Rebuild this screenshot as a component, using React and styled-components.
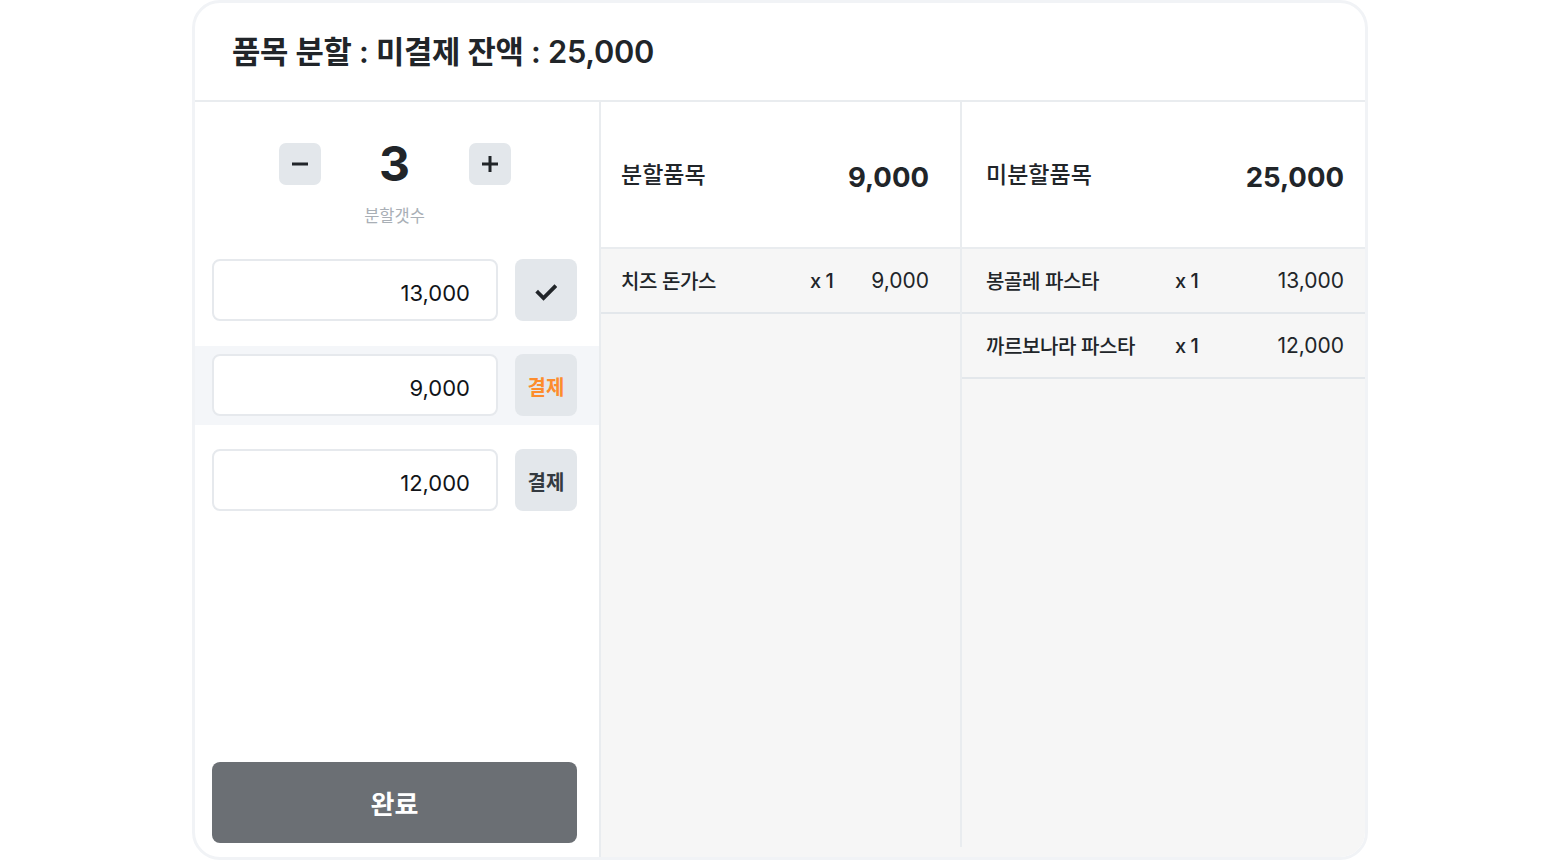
import React from "react";
import styled, { createGlobalStyle } from "styled-components";

const Global = createGlobalStyle`
  html, body { margin: 0; padding: 0; background: #ffffff; }
  body { font-family: Inter, "Noto Sans CJK KR", "Noto Sans", sans-serif; color: #212529; }
  * { box-sizing: border-box; }
`;

const Page = styled.div`
  width: 1560px;
  height: 860px;
  display: flex;
  justify-content: center;
  background: #ffffff;
`;

const Card = styled.div`
  width: 1176px;
  height: 860px;
  border: 3px solid #f1f3f6;
  border-radius: 28px;
  overflow: hidden;
  display: flex;
  flex-direction: column;
  background: #ffffff;
`;

const Header = styled.div`
  height: 99px;
  flex: none;
  display: flex;
  align-items: center;
  padding: 0 0 4px 37px;
  border-bottom: 2px solid #e9ecef;
`;

const Title = styled.h1`
  margin: 0;
  font-size: 30.8px;
  font-weight: 600;
  letter-spacing: -0.3px;
  color: #212529;
`;

const Body = styled.div`
  flex: 1;
  display: flex;
  min-height: 0;
`;

const LeftPanel = styled.div`
  width: 406px;
  flex: none;
  border-right: 2px solid #e9ecef;
  display: flex;
  flex-direction: column;
  padding-top: 41px;
`;

const Stepper = styled.div`
  display: flex;
  align-items: center;
  justify-content: center;
  padding: 0 22px 0 17px;
`;

const StepButton = styled.button`
  width: 42px;
  height: 42px;
  border: none;
  border-radius: 7px;
  background: #e3e7eb;
  display: flex;
  align-items: center;
  justify-content: center;
  padding: 0;
  cursor: pointer;
`;

const Count = styled.div`
  width: 148px;
  text-align: center;
  font-size: 48px;
  font-weight: 700;
  line-height: 42px;
  color: #212529;
`;

const CountLabel = styled.div`
  margin-top: 21px;
  text-align: center;
  font-size: 16.5px;
  line-height: 20px;
  color: #a9afb6;
  padding: 0 22px 0 17px;
`;

const Rows = styled.div`
  margin-top: 25px;
  display: flex;
  flex-direction: column;
  gap: 16px;
`;

const PayRow = styled.div`
  display: flex;
  align-items: center;
  gap: 17px;
  padding: 8px 22px 9px 17px;
  background: ${(p) => (p.$active ? "#f4f6f9" : "transparent")};
`;

const AmountInput = styled.input`
  width: 286px;
  height: 62px;
  border: 2px solid #e6e9ed;
  border-radius: 8px;
  background: #ffffff;
  text-align: right;
  padding: 5px 26px 0 12px;
  font-family: Inter, "Noto Sans CJK KR", sans-serif;
  font-size: 22px;
  color: #111418;
  outline: none;
`;

const ActionButton = styled.button`
  width: 62px;
  height: 62px;
  border: none;
  border-radius: 8px;
  background: #e3e7eb;
  display: flex;
  align-items: center;
  justify-content: center;
  padding: 3px 0 0;
  font-family: Inter, "Noto Sans CJK KR", sans-serif;
  font-size: 20px;
  font-weight: 700;
  color: ${(p) => (p.$accent ? "#fd8c2c" : "#343a40")};
  cursor: pointer;
`;

const Footer = styled.div`
  margin-top: auto;
  padding: 0 22px 14px 17px;
`;

const DoneButton = styled.button`
  width: 100%;
  height: 81px;
  border: none;
  border-radius: 8px;
  background: #6b6f74;
  color: #ffffff;
  font-family: Inter, "Noto Sans CJK KR", sans-serif;
  font-size: 26px;
  font-weight: 700;
  cursor: pointer;
`;

const ListArea = styled.div`
  flex: 1;
  display: flex;
  background: #f6f6f6;
`;

const ListPanel = styled.div`
  width: ${(p) => p.$width};
  flex: ${(p) => (p.$grow ? 1 : "none")};
  display: flex;
  flex-direction: column;
  border-right: ${(p) => (p.$divider ? "2px solid #e9ecef" : "none")};
  margin-bottom: ${(p) => (p.$divider ? "10px" : "0")};
`;

const Summary = styled.div`
  height: 147px;
  flex: none;
  background: #ffffff;
  border-bottom: 2px solid #e9ecef;
  display: flex;
  align-items: center;
  justify-content: space-between;
  padding: 0 ${(p) => p.$pr}px 0 ${(p) => p.$pl}px;
`;

const SummaryLabel = styled.div`
  font-size: 23px;
  font-weight: 500;
  color: #212529;
  margin-top: -3px;
`;

const SummaryValue = styled.div`
  font-size: 27.5px;
  font-weight: 700;
  color: #212529;
  margin-top: 4px;
`;

const ItemRow = styled.div`
  height: 65px;
  flex: none;
  display: flex;
  align-items: center;
  border-bottom: 2px solid #e3e7eb;
  padding: 0 ${(p) => p.$pr}px 0 ${(p) => p.$pl}px;
  font-size: 20px;
  font-weight: 500;
  color: #212529;
`;

const ItemName = styled.div`
  width: 189px;
  flex: none;
  letter-spacing: -0.4px;
`;

const ItemQty = styled.div`
  flex: none;
  word-spacing: -1px;
`;

const ItemPrice = styled.div`
  flex: 1;
  text-align: right;
  font-size: 21px;
  font-weight: 400;
`;

const MinusIcon = () => (
  <svg width="18" height="18" viewBox="0 0 18 18">
    <rect x="1" y="7.5" width="16" height="3" fill="#212529" />
  </svg>
);

const PlusIcon = () => (
  <svg width="18" height="18" viewBox="0 0 18 18">
    <rect x="1" y="7.5" width="16" height="3" fill="#212529" />
    <rect x="7.5" y="1" width="3" height="16" fill="#212529" />
  </svg>
);

const CheckIcon = () => (
  <svg width="22" height="22" viewBox="0 0 22 22">
    <path d="M3 11.5 L8.5 17 L19.5 6" fill="none" stroke="#212529" strokeWidth="3.8" strokeLinecap="square" strokeLinejoin="miter" />
  </svg>
);

const payRows = [
  { value: "13,000", kind: "check" },
  { value: "9,000", kind: "pay", active: true },
  { value: "12,000", kind: "pay" },
];

const splitItems = [{ name: "치즈 돈가스", qty: "x 1", price: "9,000" }];
const restItems = [
  { name: "봉골레 파스타", qty: "x 1", price: "13,000" },
  { name: "까르보나라 파스타", qty: "x 1", price: "12,000" },
];

export default function App() {
  return (
    <>
      <Global />
      <Page>
        <Card>
          <Header>
            <Title>품목 분할 : 미결제 잔액 : 25,000</Title>
          </Header>
          <Body>
            <LeftPanel>
              <Stepper>
                <StepButton aria-label="minus"><MinusIcon /></StepButton>
                <Count>3</Count>
                <StepButton aria-label="plus"><PlusIcon /></StepButton>
              </Stepper>
              <CountLabel>분할갯수</CountLabel>
              <Rows>
                {payRows.map((r, i) => (
                  <PayRow key={i} $active={r.active}>
                    <AmountInput readOnly value={r.value} />
                    <ActionButton $accent={r.active}>
                      {r.kind === "check" ? <CheckIcon /> : "결제"}
                    </ActionButton>
                  </PayRow>
                ))}
              </Rows>
              <Footer>
                <DoneButton>완료</DoneButton>
              </Footer>
            </LeftPanel>
            <ListArea>
              <ListPanel $width="361px" $divider>
                <Summary $pl={20} $pr={31}>
                  <SummaryLabel>분할품목</SummaryLabel>
                  <SummaryValue>9,000</SummaryValue>
                </Summary>
                {splitItems.map((it, i) => (
                  <ItemRow key={i} $pl={20} $pr={31}>
                    <ItemName>{it.name}</ItemName>
                    <ItemQty>{it.qty}</ItemQty>
                    <ItemPrice>{it.price}</ItemPrice>
                  </ItemRow>
                ))}
              </ListPanel>
              <ListPanel $grow>
                <Summary $pl={24} $pr={21}>
                  <SummaryLabel>미분할품목</SummaryLabel>
                  <SummaryValue>25,000</SummaryValue>
                </Summary>
                {restItems.map((it, i) => (
                  <ItemRow key={i} $pl={24} $pr={21}>
                    <ItemName>{it.name}</ItemName>
                    <ItemQty>{it.qty}</ItemQty>
                    <ItemPrice>{it.price}</ItemPrice>
                  </ItemRow>
                ))}
              </ListPanel>
            </ListArea>
          </Body>
        </Card>
      </Page>
    </>
  );
}
